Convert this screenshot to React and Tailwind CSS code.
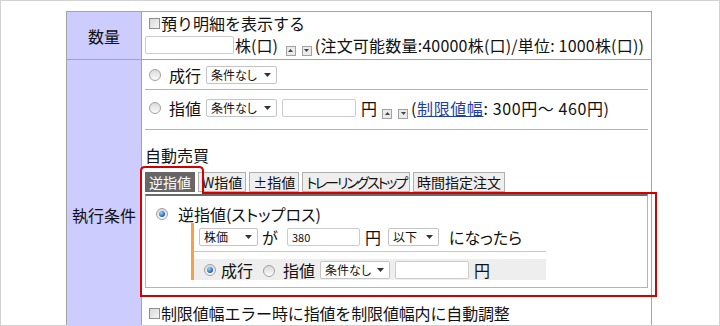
import React from "react";

const font = "font-['Noto_Sans_CJK_JP',sans-serif]";

function Radio({ on }) {
  return (
    <span className="inline-flex shrink-0 items-center justify-center w-[12px] h-[12px] rounded-full border border-[#a0a0a0] bg-gradient-to-b from-[#dadada] to-[#fbfbfb]">
      {on && <span className="w-[6px] h-[6px] rounded-full bg-[radial-gradient(circle_at_35%_30%,#9fd0ff,#1d62b8_70%)]" />}
    </span>
  );
}

function Check() {
  return (
    <span className="inline-block shrink-0 w-[11px] h-[11px] border border-[#8e8e8e] bg-gradient-to-br from-[#d8d8d8] to-[#f6f6f6]" />
  );
}

function Tri({ up }) {
  return (
    <svg width="7" height="4" viewBox="0 0 7 4">
      <path d={up ? "M0 4 L3.5 0 L7 4 Z" : "M0 0 L3.5 4 L7 0 Z"} fill="#333" />
    </svg>
  );
}

function Select({ label, className }) {
  return (
    <span
      className={
        "inline-flex shrink-0 items-center justify-between h-[18px] border border-[#c4c4c4] rounded-[2px] bg-white pl-[4px] pr-[5px] text-[12px] leading-none [font-feature-settings:'palt'] " +
        className
      }
    >
      <span>{label}</span>
      <Tri />
    </span>
  );
}

function Spin({ up }) {
  return (
    <span className="inline-flex shrink-0 items-center justify-center w-[10px] h-[10px] border border-[#a2a2a2] bg-[#ebebeb]">
      <svg width="5" height="3" viewBox="0 0 5 3">
        <path d={up ? "M0 3 L2.5 0 L5 3 Z" : "M0 0 L2.5 3 L5 0 Z"} fill="#444" />
      </svg>
    </span>
  );
}

function Input({ className, value }) {
  return (
    <span
      className={
        "inline-flex shrink-0 items-center h-[18px] border border-[#cccccc] rounded-[2px] bg-white pl-[4px] text-[11px] " +
        className
      }
    >
      {value}
    </span>
  );
}

const tabs = [
  { t: "W指値", c: "" },
  { t: "±指値", c: "" },
  { t: "トレーリングストップ", c: "tracking-[-2.1px]" },
  { t: "時間指定注文", c: "" },
];

export default function App() {
  return (
    <div className={"relative w-[720px] h-[326px] overflow-hidden bg-white border border-[#d2d2d2] text-[#111] " + font}>
      <div className="pl-[65px] pt-[10px]">
        <div className="w-[586px] border border-[#a4a4a4]">
          {/* 数量 */}
          <div className="flex border-b border-[#a4a4a4]">
            <div className="w-[75px] h-[47px] shrink-0 bg-[#ccccff] border-r border-[#a4a4a4] flex items-center justify-center text-[16px]">
              数量
            </div>
            <div className="flex-1 px-[3px] text-[16px]">
              <div className="flex items-center h-[22px] pl-[4px] gap-[1px]">
                <Check />
                <span>預り明細を表示する</span>
              </div>
              <div className="flex items-center h-[18px] mt-[2px]">
                <Input className="w-[89px]" />
                <span className="ml-[1px]">株(口)</span>
                <span className="ml-[8px]"><Spin up /></span>
                <span className="ml-[6px]"><Spin /></span>
                <span className="ml-[3px] whitespace-nowrap tracking-[0.2px]">(注文可能数量:40000株(口)/単位: 1000株(口))</span>
              </div>
            </div>
          </div>

          {/* 執行条件 */}
          <div className="flex h-[310px]">
            <div className="w-[75px] shrink-0 bg-[#ccccff] border-r border-[#a4a4a4] flex items-center justify-center text-[16px]">
              執行条件
            </div>
            <div className="flex-1 px-[3px] text-[16px]">
              <div className="flex items-center h-[30px] border-b border-[#b4b4b4] pl-[4px]">
                <Radio />
                <span className="ml-[8px]">成行</span>
                <Select label="条件なし" className="ml-[5px] w-[71px]" />
              </div>
              <div className="h-[40px] border-b border-[#b4b4b4] pl-[4px] pt-[9px]">
                <div className="flex items-center h-[18px]">
                  <Radio />
                  <span className="ml-[8px]">指値</span>
                  <Select label="条件なし" className="ml-[5px] w-[71px]" />
                  <Input className="ml-[5px] w-[74px]" />
                  <span className="ml-[5px]">円</span>
                  <span className="ml-[5px]"><Spin up /></span>
                  <span className="ml-[6px]"><Spin /></span>
                  <span className="ml-[3px] whitespace-nowrap tracking-[0.6px]">
                    (<span className="text-[#1f3fa8] underline">制限値幅</span>: 300円〜 460円)
                  </span>
                </div>
              </div>

              <div className="pt-[15px]">
                <div className="h-[20px] flex items-center">自動売買</div>
                <div className="flex gap-[3px] mt-[7px] text-[14px] [font-feature-settings:'palt']">
                  <div className="h-[20px] px-[4px] flex items-center bg-[#666666] text-white">逆指値</div>
                  {tabs.map((t) => (
                    <div key={t.t} className={"h-[20px] px-[3px] flex items-center bg-[#eeeeee] border border-[#b0b0b0] whitespace-nowrap " + t.c}>
                      {t.t}
                    </div>
                  ))}
                </div>
                <div className="mt-[2px] h-[94px] border border-[#b4b4b4] border-t-2 border-t-[#6a6a6a] pl-[10px]">
                  <div className="flex items-center h-[18px] mt-[9px]">
                    <Radio on />
                    <span className="ml-[10px] whitespace-nowrap [font-feature-settings:'palt']">逆指値(ストップロス)</span>
                  </div>
                  <div className="ml-[35px] w-[355px] border-l-[3px] border-[#f6a04a]">
                    <div className="h-[29px] border-b border-[#c8c8c8] flex items-center pl-[5px]">
                      <Select label="株価" className="w-[59px]" />
                      <span className="ml-[4px]">が</span>
                      <Input className="ml-[9px] w-[73px]" value="380" />
                      <span className="ml-[5px]">円</span>
                      <Select label="以下" className="ml-[7px] w-[51px]" />
                      <span className="ml-[10px] whitespace-nowrap [font-feature-settings:'palt']">になったら</span>
                    </div>
                    <div className="h-[7px]" />
                    <div className="h-[21px] bg-[#eeeeee] flex items-center pl-[10px]">
                      <Radio on />
                      <span className="ml-[5px]">成行</span>
                      <span className="ml-[10px]"><Radio /></span>
                      <span className="ml-[8px]">指値</span>
                      <Select label="条件なし" className="ml-[5px] w-[70px]" />
                      <Input className="ml-[5px] w-[74px]" />
                      <span className="ml-[5px]">円</span>
                    </div>
                  </div>
                </div>
                <div className="flex items-center h-[18px] mt-[16px] pl-[4px] gap-[1px]">
                  <Check />
                  <span className="whitespace-nowrap tracking-[-0.15px]">制限値幅エラー時に指値を制限値幅内に自動調整</span>
                </div>
              </div>
            </div>
          </div>
        </div>
      </div>

      <svg className="absolute inset-0 pointer-events-none" width="720" height="326">
        <path
          d="M140 295 L140 170 Q140 166 144 166 L198 166 Q202 166 202 170 L202 192 L655 192 L655 295 Z"
          fill="none"
          stroke="#d40000"
          strokeWidth="2"
        />
      </svg>
    </div>
  );
}
